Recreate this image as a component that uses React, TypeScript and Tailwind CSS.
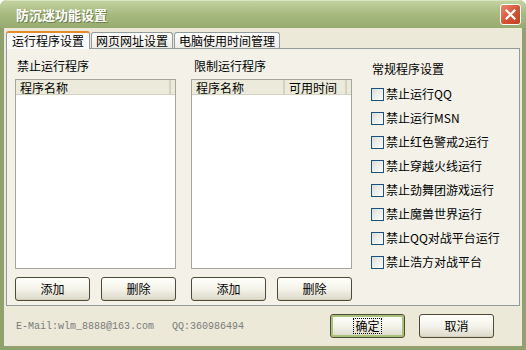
import React from 'react';

const cjk = { fontFamily: '"Noto Sans CJK SC", "Noto Sans", sans-serif' };

const Btn: React.FC<{ label: string; primary?: boolean }> = ({ label, primary }) => (
  <div
    className={`w-[75px] h-[24px] rounded-[3px] border border-[#4d4a3a] bg-gradient-to-b from-[#fffffb] via-[#f4f3ea] to-[#dcd9c8] flex items-center justify-center text-[12px] text-black ${
      primary ? 'shadow-[inset_0_0_0_2px_#a9c27a]' : 'shadow-[inset_0_-1px_0_#d6d0bb]'
    }`}
    style={cjk}
  >
    <span className={primary ? 'outline outline-1 outline-dotted outline-black px-[1px] leading-[14px]' : 'leading-[14px]'}>
      {label}
    </span>
  </div>
);

const ListBox: React.FC<{ cols: string[] }> = ({ cols }) => (
  <div className="w-[161px] h-[190px] border border-[#a5a79b] bg-white flex flex-col">
    <div className="h-[15px] flex bg-[#ebeadb] border-b border-[#d6d2c2] text-[12px] leading-[15px]" style={cjk}>
      {cols.length === 1 ? (
        <div className="w-[155px] pl-[4px] border-r-2 border-[#d6d2c2]">{cols[0]}</div>
      ) : (
        <>
          <div className="w-[93px] pl-[4px] border-r-2 border-[#d6d2c2]">{cols[0]}</div>
          <div className="w-[62px] pl-[4px] border-r-2 border-[#d6d2c2]">{cols[1]}</div>
        </>
      )}
    </div>
  </div>
);

const Check: React.FC<{ label: string }> = ({ label }) => (
  <div className="h-[24px] flex items-center gap-[2px]">
    <div className="w-[13px] h-[13px] border border-[#1c5180] bg-gradient-to-br from-[#dcdcd7] to-white" />
    <span className="text-[12px] leading-[14px]">{label}</span>
  </div>
);

export default function App() {
  const checks = [
    '禁止运行QQ',
    '禁止运行MSN',
    '禁止红色警戒2运行',
    '禁止穿越火线运行',
    '禁止劲舞团游戏运行',
    '禁止魔兽世界运行',
    '禁止QQ对战平台运行',
    '禁止浩方对战平台',
  ];

  return (
    <div className="w-[526px] h-[350px] flex flex-col bg-[#8fa26d] rounded-t-[7px] overflow-hidden" style={cjk}>
      {/* title bar */}
      <div className="h-[28px] shrink-0 flex items-center justify-between pl-[16px] pr-[5px] bg-gradient-to-b from-[#c3d3a0] via-[#a6b97e] to-[#97ab70] border-t border-[#d9e4c0]">
        <span className="text-[13px] font-bold text-white [text-shadow:1px_1px_0_#6f8050]">防沉迷功能设置</span>
        <div className="w-[21px] h-[21px] rounded-[3px] border border-white bg-gradient-to-br from-[#e88a6c] via-[#d8553a] to-[#c1401f] flex items-center justify-center">
          <svg width="11" height="11" viewBox="0 0 11 11">
            <path d="M1.5 1.5 L9.5 9.5 M9.5 1.5 L1.5 9.5" stroke="white" strokeWidth="2.2" strokeLinecap="square" />
          </svg>
        </div>
      </div>

      {/* body */}
      <div className="flex-1 mx-[4px] mb-[4px] bg-[#ece9d8] flex flex-col">
        {/* tabs */}
        <div className="h-[20px] pl-[2px] pt-[3px] flex items-end text-[12px]">
          <div className="h-[18px] px-[5px] flex items-center bg-[#fcfcfe] border border-b-0 border-[#919b9c] border-t-2 border-t-[#e68b2c] rounded-t-[3px] relative z-10 -mb-[1px]">
            运行程序设置
          </div>
          <div className="h-[16px] ml-[1px] px-[4px] flex items-center bg-gradient-to-b from-white to-[#ecebe6] border border-b-0 border-[#919b9c] rounded-t-[3px]">
            网页网址设置
          </div>
          <div className="h-[16px] ml-[1px] px-[4px] flex items-center bg-gradient-to-b from-white to-[#ecebe6] border border-b-0 border-[#919b9c] rounded-t-[3px]">
            电脑使用时间管理
          </div>
        </div>

        {/* tab panel */}
        <div className="ml-[2px] w-[514px] h-[258px] border border-[#919b9c] bg-[#f3f1e8] flex pl-[8px] pt-[10px] text-[12px]">
          <div className="flex flex-col w-[161px]">
            <div className="h-[14px] leading-[14px] pl-[2px]">禁止运行程序</div>
            <div className="mt-[6px]">
              <ListBox cols={['程序名称']} />
            </div>
            <div className="mt-[8px] flex justify-between">
              <Btn label="添加" />
              <Btn label="删除" />
            </div>
          </div>

          <div className="flex flex-col w-[161px] ml-[15px]">
            <div className="h-[14px] leading-[14px] pl-[3px]">限制运行程序</div>
            <div className="mt-[6px]">
              <ListBox cols={['程序名称', '可用时间']} />
            </div>
            <div className="mt-[8px] flex justify-between">
              <Btn label="添加" />
              <Btn label="删除" />
            </div>
          </div>

          <div className="flex flex-col ml-[19px] pt-[3px]">
            <div className="h-[14px] leading-[14px] pl-[1px]">常规程序设置</div>
            <div className="mt-[6px] flex flex-col">
              {checks.map((c) => (
                <Check key={c} label={c} />
              ))}
            </div>
          </div>
        </div>

        {/* footer */}
        <div className="flex-1 flex items-center pl-[12px]">
          <span
            className="text-[10px] text-[#7b7b7b] whitespace-pre"
            style={{ fontFamily: '"Liberation Mono", monospace' }}
          >
            {'E-Mail:wlm_8888@163.com   QQ:360986494'}
          </span>
          <div className="ml-auto mr-[28px] flex gap-[14px]">
            <Btn label="确定" primary />
            <Btn label="取消" />
          </div>
        </div>
      </div>
    </div>
  );
}
